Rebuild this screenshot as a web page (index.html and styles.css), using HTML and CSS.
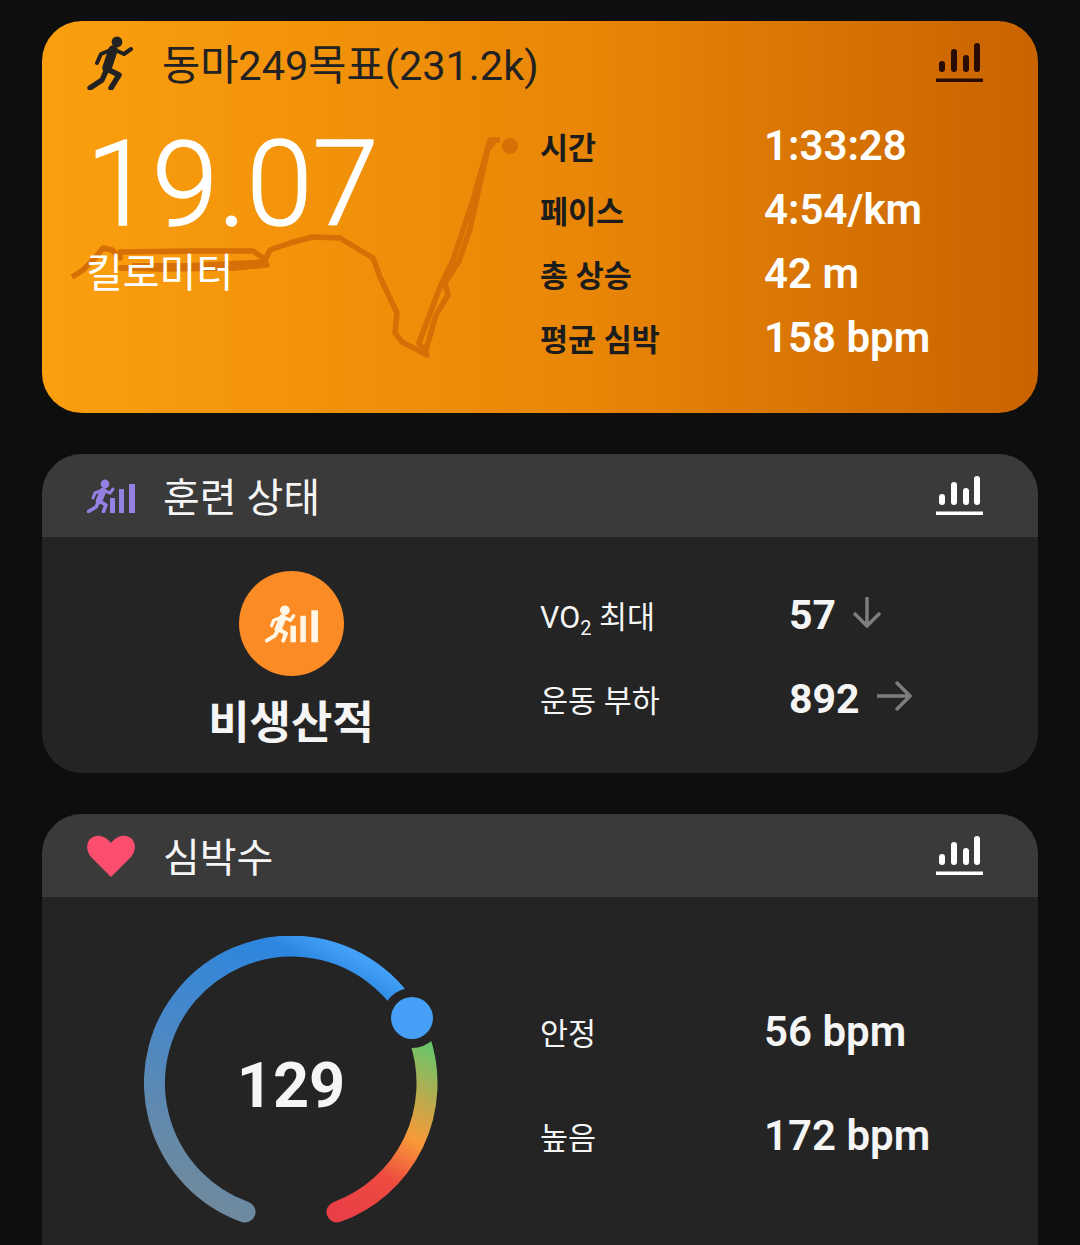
FILE: index.html
```html
<!DOCTYPE html>
<html lang="ko">

<head>
    <meta charset="UTF-8">
    <title>활동 요약</title>
    <link rel="stylesheet" href="styles.css">
</head>

<body>

    <svg class="defs" width="0" height="0">
        <symbol id="iconStats" viewBox="0 0 47 39">
            <rect x="3" y="18" width="6" height="11" rx="3" />
            <rect x="15" y="6" width="6" height="23" rx="3" />
            <rect x="27" y="12" width="6" height="17" rx="3" />
            <rect x="38" y="0" width="6" height="29" rx="3" />
            <rect x="0" y="35.5" width="47" height="3.5" />
        </symbol>
        <symbol id="iconTraining" viewBox="0 0 48 34">
            <circle cx="18" cy="5" r="4.4" fill="currentColor" />
            <g fill="none" stroke="currentColor" stroke-linecap="round" stroke-linejoin="round">
                <path d="M16 12 12 22" stroke-width="6.5" />
                <path d="M16 11 23 14 26 10M16 11 8 14 6 19" stroke-width="3" />
                <path d="M12 22 9 28 1.5 32.5M12 22 19 26 16.5 32.5" stroke-width="3.6" />
            </g>
            <rect x="23" y="19" width="5" height="15" fill="currentColor" />
            <rect x="32" y="10" width="5" height="24" fill="currentColor" />
            <rect x="42" y="5" width="6" height="29" fill="currentColor" />
        </symbol>
    </svg>

    <section class="card card-run">
        <svg class="route" viewBox="0 0 996 392">
            <path d="M30 256 41 249 53 237 61 227 70 229 78 237 78 231 150 230 211 230 221 237 225 244 191 247 120 248 78 247 120 246 222 241 228 229 248 222 271 216 298 217 331 237 338 256 355 292 353 312 360 321 385 334 377 322 398 266 411 239 431 179 448 119 458 119" />
            <path d="M383 332 394 294 406 274 403 262 417 240 428 208 436 172 446 128 452 121" />
            <path class="route-thick" d="M90 246 190 246 222 242" />
            <circle cx="468" cy="125" r="8" />
        </svg>
        <header class="card-head">
            <svg class="runner" viewBox="0 0 46 54">
                <circle cx="30" cy="6" r="5.4" />
                <g fill="none" stroke="currentColor" stroke-linecap="round" stroke-linejoin="round">
                    <path d="M26 14 20 32" stroke-width="9.5" />
                    <path d="M26 13 37 18 44 13M26 13 14 18 10 27" stroke-width="4" />
                    <path d="M20 33 15 44 3 52M20 33 32 39 24 52" stroke-width="5.4" />
                </g>
            </svg>
            <h2>동마249목표(231.2k)</h2>
            <svg class="stats-icon"><use href="#iconStats" /></svg>
        </header>
        <div class="card-body">
            <div class="distance">
                <div class="distance-num">19.07</div>
                <div class="distance-unit">킬로미터</div>
            </div>
            <dl class="rows rows-run">
                <dt>시간</dt><dd>1:33:28</dd>
                <dt>페이스</dt><dd>4:54/km</dd>
                <dt>총 상승</dt><dd>42 m</dd>
                <dt>평균 심박</dt><dd>158 bpm</dd>
            </dl>
        </div>
    </section>

    <section class="card">
        <header class="card-head dark">
            <svg class="head-icon purple"><use href="#iconTraining" /></svg>
            <h2>훈련 상태</h2>
            <svg class="stats-icon"><use href="#iconStats" /></svg>
        </header>
        <div class="card-body training">
            <div class="status">
                <div class="status-badge">
                    <svg class="badge-icon"><use href="#iconTraining" /></svg>
                </div>
                <div class="status-text">비생산적</div>
            </div>
            <dl class="rows rows-training">
                <dt>VO<sub>2</sub> 최대</dt>
                <dd>57
                    <svg class="trend trend-down" viewBox="0 0 30 32">
                        <path d="M15 1V30M2 17 15 30 28 17" />
                    </svg>
                </dd>
                <dt>운동 부하</dt>
                <dd>892
                    <svg class="trend trend-flat" viewBox="0 0 36 30">
                        <path d="M1 15H34M20 1 34 15 20 29" />
                    </svg>
                </dd>
            </dl>
        </div>
    </section>

    <section class="card card-last">
        <header class="card-head dark">
            <svg class="head-icon heart" viewBox="0 0 48 42">
                <path d="M24 42 4 22C-1 16-1 9 3 4 8-1 17-1 24 8 31-1 40-1 45 4 49 9 49 16 44 22Z" />
            </svg>
            <h2>심박수</h2>
            <svg class="stats-icon"><use href="#iconStats" /></svg>
        </header>
        <div class="card-body heart-body">
            <div class="gauge-col">
                <div class="gauge">
                    <svg viewBox="0 0 294 294" width="294" height="294">
                        <defs>
                            <linearGradient id="gradBlue" gradientUnits="userSpaceOnUse" x1="90" y1="280" x2="230" y2="30">
                                <stop offset="0" stop-color="#6f8a9e" />
                                <stop offset="0.45" stop-color="#4a88c6" />
                                <stop offset="0.9" stop-color="#2c86e0" />
                                <stop offset="1" stop-color="#42a0f8" />
                            </linearGradient>
                            <linearGradient id="gradHot" gradientUnits="userSpaceOnUse" x1="290" y1="110" x2="200" y2="280">
                                <stop offset="0" stop-color="#68c66c" />
                                <stop offset="0.28" stop-color="#bfa94c" />
                                <stop offset="0.48" stop-color="#f89a38" />
                                <stop offset="0.72" stop-color="#ee4b40" />
                                <stop offset="1" stop-color="#e93f46" />
                            </linearGradient>
                        </defs>
                        <path class="arc" stroke="url(#gradBlue)" d="M101 276A137 137 0 1 1 268 82" />
                        <path class="arc" stroke="url(#gradHot)" d="M276 104A137 137 0 0 1 193 276" />
                        <circle cx="268" cy="82" r="30" fill="#242424" />
                        <circle cx="268" cy="82" r="21" fill="#459ff7" />
                    </svg>
                    <div class="gauge-num">129</div>
                </div>
            </div>
            <dl class="rows rows-heart">
                <dt>안정</dt><dd>56 bpm</dd>
                <dt>높음</dt><dd>172 bpm</dd>
            </dl>
        </div>
    </section>

</body>

</html>
```

FILE: styles.css
```css
/* Base Styles */
html,
body {
    height: 100%;
    overflow: hidden;
}

body {
    margin: 0;
    padding: 21px 42px 0;
    box-sizing: border-box;
    background: #0e0e0f;
    color: #f5f5f5;
    font-family: Roboto, "Noto Sans CJK KR", sans-serif;
}

.defs {
    position: absolute;
}

.card {
    background: #242424;
    border-radius: 40px;
    margin-bottom: 41px;
    overflow: hidden;
    position: relative;
}

.card-last {
    margin-bottom: 0;
    border-radius: 40px 40px 0 0;
}

.card-run {
    height: 392px;
    background: linear-gradient(90deg, #fb9f0e 0%, #e98607 55%, #c86300 100%);
    color: #222;
}

/* Header */
.card-head {
    height: 83px;
    display: flex;
    align-items: center;
    padding: 0 55px 0 45px;
    position: relative;
}

.card-head.dark {
    background: #3a3a3b;
}

.card-head h2 {
    margin: 6px 0 0 28px;
    font-size: 40px;
    font-weight: 400;
    line-height: 1;
    flex: 1;
}

.card-run .card-head h2 {
    margin: 6px 0 0 29px;
    font-size: 41.5px;
}

.runner {
    width: 46px;
    height: 54px;
    fill: currentColor;
    color: #222;
}

.head-icon {
    width: 48px;
    height: 34px;
}

.purple {
    color: #9581e3;
}

.heart {
    height: 42px;
    fill: #fb4d6e;
}

.stats-icon {
    width: 47px;
    height: 39px;
    fill: #fff;
}

.card-run .stats-icon {
    fill: #2a0c00;
}

/* Body */
.card-body {
    display: flex;
    position: relative;
}

.route {
    position: absolute;
    top: 0;
    left: 0;
    width: 996px;
    height: 392px;
    fill: none;
    stroke: #d66f05;
    stroke-width: 5.5;
    stroke-linejoin: round;
}

.route .route-thick {
    stroke-width: 8;
}

.route circle {
    fill: #d66f05;
    stroke: none;
}

.distance {
    width: 498px;
    padding-left: 44px;
    box-sizing: border-box;
    position: relative;
    color: #fff;
}

.distance-num {
    font-size: 119px;
    font-weight: 300;
    -webkit-text-stroke: 1.5px #fff;
    line-height: 100px;
    margin-top: 31px;
}

.distance-unit {
    font-size: 40px;
    line-height: 1;
    margin-top: 19px;
}

.rows {
    margin: 0;
    display: grid;
    align-items: center;
}

.rows dt {
    margin: 0;
    font-size: 30.5px;
}

.rows dd {
    margin: 0;
    font-size: 42px;
    font-weight: 600;
    display: flex;
    align-items: center;
}

.rows-run {
    grid-template-columns: 224px 1fr;
    grid-auto-rows: 64px;
    margin-top: 10px;
    position: relative;
}

.rows-run dt {
    font-weight: 700;
    color: #1c1c1c;
}

.rows-run dd {
    color: #fff;
    padding-bottom: 2px;
}

/* Training status */
.status {
    width: 498px;
    display: flex;
    flex-direction: column;
    align-items: center;
    padding: 34px 0 0;
    height: 236px;
    box-sizing: border-box;
}

.status-badge {
    width: 105px;
    height: 105px;
    border-radius: 50%;
    background: #fb8b24;
    display: flex;
    align-items: center;
    justify-content: center;
    color: #fff6e6;
}

.badge-icon {
    width: 53px;
    height: 39px;
}

.status-text {
    font-size: 45px;
    font-weight: 700;
    line-height: 1;
    margin-top: 25px;
}

.rows-training {
    grid-template-columns: 249px 1fr;
    grid-auto-rows: 84px;
    margin-top: 36px;
    align-self: flex-start;
}

.rows-training dd {
    font-size: 41px;
    font-weight: 700;
}

.rows-training dt sub {
    font-size: 20px;
    line-height: 0;
}

.trend {
    fill: none;
    stroke: #7d7d7d;
    stroke-width: 3.5;
    margin: 0 0 6px 16px;
}

.trend-down {
    width: 30px;
    height: 32px;
}

.trend-flat {
    width: 36px;
    height: 30px;
}

/* Heart rate */
.heart-body {
    height: 348px;
}

.gauge-col {
    width: 498px;
    padding: 39px 0 0 102px;
    box-sizing: border-box;
}

.gauge {
    width: 294px;
    height: 294px;
    position: relative;
}

.arc {
    fill: none;
    stroke-width: 21;
    stroke-linecap: round;
}

.gauge-num {
    position: absolute;
    inset: 4px 0 0 0;
    display: flex;
    align-items: center;
    justify-content: center;
    font-size: 63px;
    font-weight: 700;
}

.rows-heart {
    grid-template-columns: 224px 1fr;
    grid-auto-rows: 104px;
    margin-top: 83px;
    align-self: flex-start;
}

.rows-heart dd {
    padding-bottom: 2px;
}
```
